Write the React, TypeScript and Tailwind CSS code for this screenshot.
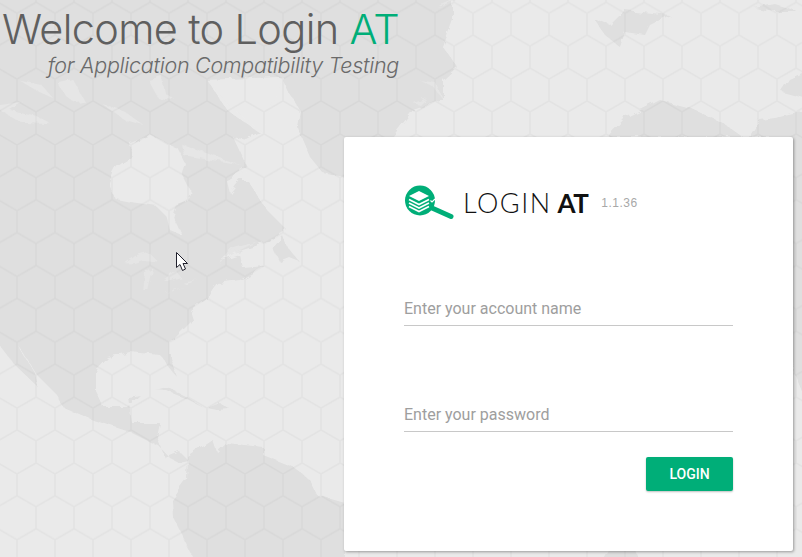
// Login AT welcome screen
const MapBackground = () => (
  <svg className="absolute inset-0" width="802" height="557" viewBox="0 0 802 557">
    <defs>
      <pattern id="hex" width="38" height="65.8" patternUnits="userSpaceOnUse" patternTransform="translate(17 13.3)">
        <path
          d="M0 0V21.9L19 32.9L38 21.9V0M19 32.9V54.8L0 65.8M19 54.8L38 65.8"
          fill="none"
          stroke="#000"
          strokeOpacity="0.03"
          strokeWidth="1.5"
        />
      </pattern>
      <filter id="coast" x="0" y="0" width="100%" height="100%">
        <feTurbulence type="fractalNoise" baseFrequency="0.09" numOctaves="3" seed="4" result="noise" />
        <feDisplacementMap in="SourceGraphic" in2="noise" scale="7" />
        <feGaussianBlur stdDeviation="0.35" />
      </filter>
    </defs>
    <rect width="802" height="557" fill="#eaeaea" />

    <g filter="url(#coast)">
      {/* north america + greenland */}
      <path
        fill="#dfdfdf"
        d="M-10 -10H453L453 20L443 47L457 67L443 80L443 100L413 110L390 140L345 178L323 173L310 157L297 127L300 110L287 90L283 80L207 80L227 110L260 133L247 140L233 137L247 167L227 180L247 180L267 210L287 230L265 243L233 253L218 262L240 255L243 268L265 266L240 280L217 283L207 297L203 300L190 310L193 320L170 343L170 357L177 377L167 365L160 355L130 352L107 357L95 370L95 390L103 407L127 407L140 395L128 397L132 423L160 423L157 437L165 458L180 452L188 460L178 462L170 458L158 445L150 442L130 432L93 420L63 407L55 393L37 375L20 348L17 345L35 373L38 387L15 365L-10 333Z"
      />
      {/* south america */}
      <path
        fill="#dfdfdf"
        d="M188 457L213 440L217 452L227 443L263 447L263 455L293 467L310 480L317 495L345 503V567H198L173 517L172 500L187 480Z"
      />
      {/* newfoundland, caribbean */}
      <path fill="#dfdfdf" d="M273 248L283 236L287 247L300 262L290 258L280 262Z" />
      <path fill="#dfdfdf" d="M155 390L167 387L187 397L203 407L187 399L167 391Z" />
      <path fill="#dfdfdf" d="M207 408L220 403L230 409L217 410Z" />

      {/* europe, svalbard, right edge */}
      <path fill="#dfdfdf" d="M593 18L610 25L625 10L670 15L650 25L645 35L625 32L620 47L605 35Z" />
      <path fill="#dfdfdf" d="M607 137L625 118L660 100L690 108L723 123L747 140L760 120L775 118L812 110V415L793 370L770 137Z" />
      <path fill="#dfdfdf" d="M812 70L790 80L782 92L812 100Z" />
      <path fill="#dfdfdf" d="M755 8L775 4L800 12L775 12Z" />
      <path fill="#dfdfdf" d="M600 567L612 545L633 545L640 567Z" />

      {/* hudson bay and baffin channels */}
      <g fill="#eaeaea" transform="translate(0 60) scale(0.3333)">
        <path d="M325 370L350 320L395 290L390 250L450 225L500 250L530 262L555 310L545 340L575 400L560 430L530 440L520 470L545 525L510 510L500 470L470 440L400 430L350 420Z" />
        <path d="M620 60L850 50L790 220L680 130Z" />
        <path d="M680 360L740 335L690 400Z" />
      </g>
      <g fill="#e6e6e6" transform="translate(0 60) scale(0.3333)">
        <path d="M0 135L70 125L30 150L100 165L150 190L60 185L0 150Z" />
        <path d="M175 70L220 60L255 125L225 130L195 105Z" />
        <path d="M60 62L125 75L160 115L110 92Z" />
        <path d="M310 135L375 155L430 195L375 180Z" />
        <path d="M445 60L485 48L495 100L525 120L475 115Z" />
        <path d="M540 250L620 280L735 320L700 310L620 298L550 285Z" />
      </g>

      {/* great lakes, st lawrence */}
      <g fill="#e5e5e5" transform="translate(100 200) scale(0.3333)">
        <path d="M75 190L110 165L145 155L175 185L130 180L100 190Z" />
        <path d="M130 270L135 220L160 205L145 270Z" />
        <path d="M190 240L225 210L245 235L205 245Z" />
        <path d="M195 278L250 260L215 275Z" />
        <path d="M245 245L290 238L255 250Z" />
        <path d="M355 190L400 145L470 125L410 155Z" />
      </g>

      {/* greenland fjords */}
      <g fill="#e5e5e5" transform="translate(280 0) scale(0.3333)">
        <path d="M470 20L520 0L540 0L500 15Z" />
        <path d="M490 300L460 260L420 240L470 250Z" />
        <path d="M400 310L440 295L420 315Z" />
      </g>
    </g>

    <rect width="802" height="557" fill="url(#hex)" />
  </svg>
);

const Logo = () => (
  <svg width="50" height="36" viewBox="0 0 50 36" className="shrink-0">
    <path d="M28 23L47 31.5" stroke="#00ae78" strokeWidth="5" strokeLinecap="round" />
    <circle cx="16" cy="15.5" r="15" fill="#00ae78" />
    <path d="M15 6L25 11L15 16L5 11Z" fill="#fff" />
    <path
      d="M5 14.5L15 19.5L25 14.5M5 18L15 23L25 18M5 21.5L15 26.5L25 21.5"
      fill="none"
      stroke="#fff"
      strokeWidth="1.7"
    />
    <path d="M26.5 15.5L28 17L31 14" fill="none" stroke="#fff" strokeWidth="1.2" />
  </svg>
);

const Pointer = () => (
  <svg className="absolute left-[175px] top-[251px]" width="15" height="22" viewBox="0 0 15 22">
    <path d="M1.5 1.5V16.5L5 13.5L7.5 19.5L10.5 18L8 12.5H12.5Z" fill="#fff" stroke="#20202c" strokeWidth="1" />
  </svg>
);

const App = () => (
  <div className="relative h-[557px] w-[802px] overflow-hidden font-['Roboto',sans-serif]">
    <MapBackground />
    <Pointer />

    <div className="relative w-[402px] pr-[3px] text-right font-['Inter',sans-serif] font-light text-[#5f5f5f]">
      <h1 className="whitespace-nowrap pt-[5px] text-[41.5px] leading-[48px] tracking-[-0.65px]">
        Welcome to Login <span className="text-[#00ae78]">AT</span>
      </h1>
      <p className="whitespace-nowrap text-[21.5px] leading-[25px] italic tracking-[-0.28px] text-[#6a6a6a]">for Application Compatibility Testing</p>
    </div>

    <div className="relative ml-[344px] mt-[59px] h-[414px] w-[449px] rounded-[2px] bg-white px-[60px] pt-[48px] shadow-[1px_1px_3px_rgba(0,0,0,0.35)]">
      <div className="flex items-center">
        <Logo />
        <span className="ml-[9px] font-['Lato',sans-serif] text-[27px] font-light leading-8 tracking-[1.5px] text-[#111]">
          LOGIN <span className="-ml-[3px] text-[26px] font-bold tracking-[-0.5px]">AT</span>
        </span>
        <span className="ml-[13px] font-['Liberation_Sans',sans-serif] text-[12px] tracking-[0.5px] text-[#a8a8a8]">1.1.36</span>
      </div>

      <input
        placeholder="Enter your account name"
        className="mt-[69px] block h-[36px] w-full border-b border-[#c8c8c8] pt-[1px] text-base text-[#444] outline-none placeholder:text-[#9e9e9e]"
      />
      <input
        type="password"
        placeholder="Enter your password"
        className="mt-[70px] block h-[36px] w-full border-b border-[#c8c8c8] pt-[1px] text-base text-[#444] outline-none placeholder:text-[#9e9e9e]"
      />

      <div className="mt-[25px] flex justify-end">
        <button className="h-[34px] w-[87px] rounded-[2px] bg-[#00ae78] text-sm font-medium text-white shadow-[0_1px_2px_rgba(0,0,0,0.25)]">
          LOGIN
        </button>
      </div>
    </div>
  </div>
);

export default App;
